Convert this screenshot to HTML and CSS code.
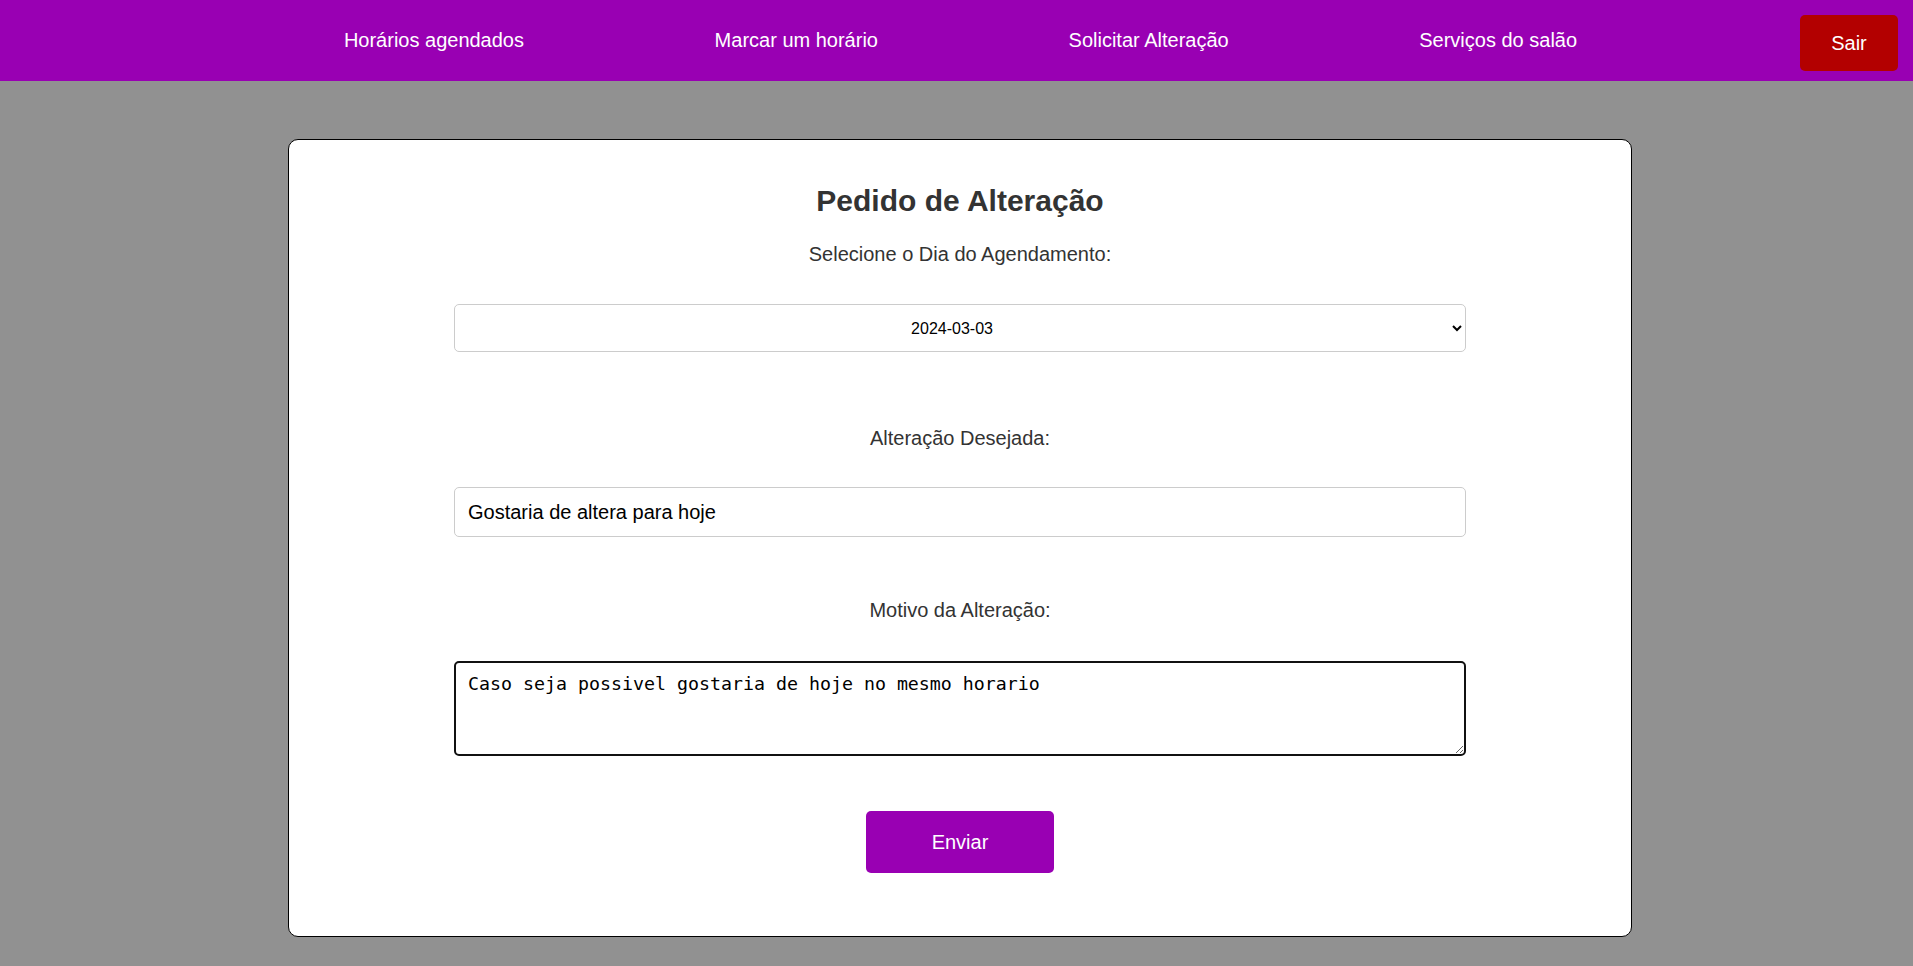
FILE: index.html
```html
<!DOCTYPE html>
<html lang="pt-BR">
<head>
<meta charset="utf-8">
<title>Pedido de Alteração</title>
<link rel="stylesheet" href="styles.css">
</head>
<body>
<header class="topbar">
  <div class="topbar-spacer"></div>
  <nav class="nav-links">
    <a class="nav-link" href="#">Horários agendados</a>
    <a class="nav-link" href="#">Marcar um horário</a>
    <a class="nav-link" href="#">Solicitar Alteração</a>
    <a class="nav-link" href="#">Serviços do salão</a>
  </nav>
  <div class="topbar-right">
    <button class="btn-logout" type="button">Sair</button>
  </div>
</header>

<main class="page">
  <section class="card">
    <h2 class="card-title">Pedido de Alteração</h2>
    <form class="form">
      <label class="field-label label-first" for="dia">Selecione o Dia do Agendamento:</label>
      <select class="field-select" id="dia">
        <option>2024-03-03</option>
      </select>

      <label class="field-label label-gap" for="alteracao">Alteração Desejada:</label>
      <input class="field-input" id="alteracao" type="text" value="Gostaria de altera para hoje">

      <label class="field-label label-gap2" for="motivo">Motivo da Alteração:</label>
      <textarea class="field-textarea" id="motivo">Caso seja possivel gostaria de hoje no mesmo horario</textarea>

      <button class="btn-submit" type="button">Enviar</button>
    </form>
  </section>
</main>
</body>
</html>
```

FILE: styles.css
```css
* {
  box-sizing: border-box;
}

html, body {
  margin: 0;
  padding: 0;
}

body {
  background: #919191;
  font-family: "Liberation Sans", Arial, sans-serif;
  color: #333;
  min-height: 966px;
}

/* Top bar */
.topbar {
  height: 81px;
  background: #9900b3;
  display: grid;
  grid-template-columns: 1fr auto 1fr;
  align-items: center;
}

.nav-links {
  display: flex;
  align-items: center;
  gap: 190.6px;
  margin-left: 8px;
}

.nav-link {
  color: #fff;
  text-decoration: none;
  font-size: 20px;
  line-height: 23px;
  white-space: nowrap;
}

.topbar-right {
  display: flex;
  justify-content: flex-end;
  padding-right: 15px;
  align-self: start;
  padding-top: 15px;
}

.btn-logout {
  width: 98px;
  height: 56px;
  background: #b30000;
  color: #fff;
  border: none;
  border-radius: 5px;
  font-family: "Liberation Sans", Arial, sans-serif;
  font-size: 20px;
  padding: 0;
  padding-top: 1px;
}

/* Page */
.page {
  display: flex;
  justify-content: center;
  padding-top: 58px;
  padding-left: 7px;
}

.card {
  width: 1344px;
  height: 798px;
  background: #fff;
  border: 1px solid #000;
  border-radius: 10px;
  padding: 44px 165px 0 165px;
}

.card-title {
  margin: 0;
  text-align: center;
  font-size: 30px;
  line-height: 34px;
  font-weight: bold;
  color: #333;
}

.form {
  display: flex;
  flex-direction: column;
}

.field-label {
  display: block;
  text-align: center;
  font-size: 20px;
  line-height: 23px;
  color: #333;
}

.label-first {
  margin-top: 25px;
}

.label-gap {
  margin-top: 75px;
}

.label-gap2 {
  margin-top: 62px;
}

.field-select {
  margin-top: 38px;
  width: 100%;
  height: 48px;
  border: 1px solid #ccc;
  border-radius: 5px;
  background: #fff;
  color: #000;
  font-family: "Liberation Sans", Arial, sans-serif;
  font-size: 16px;
  text-align: center;
  text-align-last: center;
  padding: 0 8px 0 4px;
}

.field-input {
  margin-top: 37px;
  width: 100%;
  height: 50px;
  border: 1px solid #ccc;
  border-radius: 5px;
  background: #fff;
  color: #000;
  font-family: "Liberation Sans", Arial, sans-serif;
  font-size: 20px;
  padding: 0 13px;
  outline: none;
}

.field-textarea {
  margin-top: 39px;
  width: 100%;
  height: 95px;
  border: 2px solid #111;
  border-radius: 5px;
  background: #fff;
  color: #000;
  font-family: "DejaVu Sans Mono", "Liberation Mono", monospace;
  font-size: 18.27px;
  line-height: 22px;
  padding: 10px 12px;
  outline: none;
  resize: vertical;
  display: block;
}

.btn-submit {
  align-self: center;
  margin-top: 55px;
  width: 188px;
  height: 62px;
  background: #9900b3;
  color: #fff;
  border: none;
  border-radius: 5px;
  font-family: "Liberation Sans", Arial, sans-serif;
  font-size: 20px;
  padding: 0;
}
```
